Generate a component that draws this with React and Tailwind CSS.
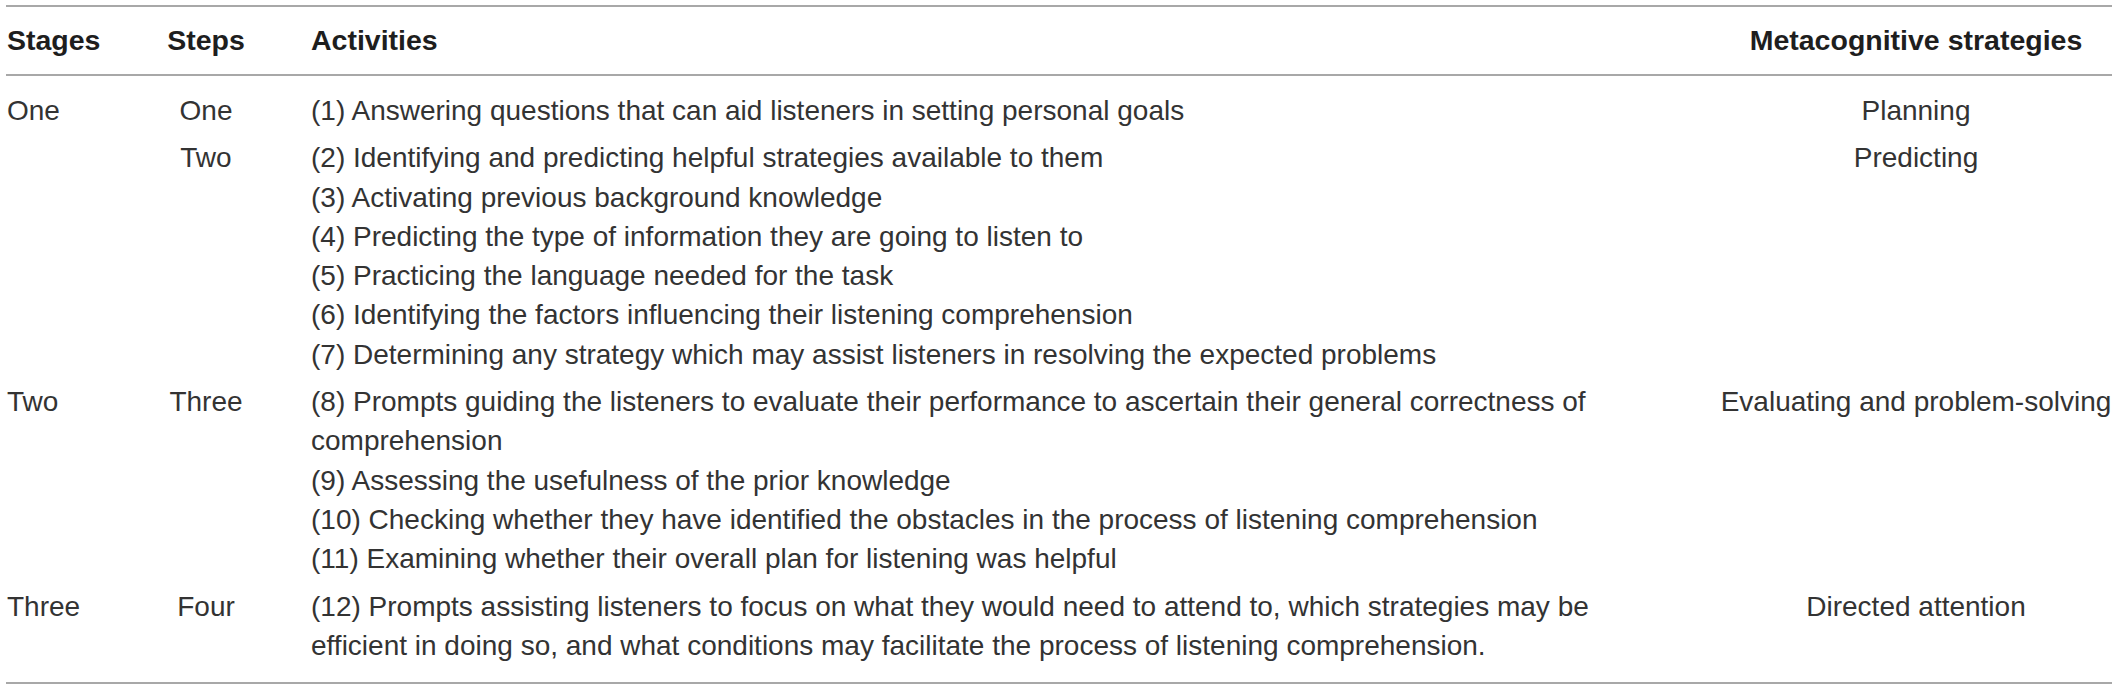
const rows = [
  {
    stage: "One",
    step: "One",
    activities: [["(1) Answering questions that can aid listeners in setting personal goals"]],
    strategy: "Planning",
  },
  {
    stage: "",
    step: "Two",
    activities: [
      ["(2) Identifying and predicting helpful strategies available to them"],
      ["(3) Activating previous background knowledge"],
      ["(4) Predicting the type of information they are going to listen to"],
      ["(5) Practicing the language needed for the task"],
      ["(6) Identifying the factors influencing their listening comprehension"],
      ["(7) Determining any strategy which may assist listeners in resolving the expected problems"],
    ],
    strategy: "Predicting",
  },
  {
    stage: "Two",
    step: "Three",
    activities: [
      [
        "(8) Prompts guiding the listeners to evaluate their performance to ascertain their general correctness of",
        "comprehension",
      ],
      ["(9) Assessing the usefulness of the prior knowledge"],
      ["(10) Checking whether they have identified the obstacles in the process of listening comprehension"],
      ["(11) Examining whether their overall plan for listening was helpful"],
    ],
    strategy: "Evaluating and problem-solving",
  },
  {
    stage: "Three",
    step: "Four",
    activities: [
      [
        "(12) Prompts assisting listeners to focus on what they would need to attend to, which strategies may be",
        "efficient in doing so, and what conditions may facilitate the process of listening comprehension.",
      ],
    ],
    strategy: "Directed attention",
  },
];

const cols = "grid grid-cols-[144px_112px_1458px_392px]";

export default function App() {
  return (
    <div className="bg-white w-[2118px] h-[690px] pt-[5px] pl-[6px] font-['Liberation_Sans',Arial,sans-serif] text-[#333333]">
      <div className="w-[2106px] border-t-2 border-b-2 border-[#a8a8a8]">
        {/* header */}
        <div className={`${cols} h-[69px] items-center border-b-2 border-[#a8a8a8] text-[28.5px] font-bold text-[#1e1e1e] leading-[39px]`}>
          <div className="pl-[1px]">Stages</div>
          <div className="text-center">Steps</div>
          <div className="pl-[49px]">Activities</div>
          <div className="text-center">Metacognitive strategies</div>
        </div>

        {/* body */}
        <div className="pt-[11px] pb-[13px] text-[28px] leading-[39.3px]">
          {rows.map((row, i) => (
            <div key={i} className={`${cols} py-[4px]`}>
              <div className="pl-[1px]">{row.stage}</div>
              <div className="text-center">{row.step}</div>
              <div className="pl-[49px] whitespace-nowrap">
                {row.activities.map((lines, j) => (
                  <div key={j}>
                    {lines.map((line, k) => (
                      <div key={k}>{line}</div>
                    ))}
                  </div>
                ))}
              </div>
              <div className="text-center whitespace-nowrap">{row.strategy}</div>
            </div>
          ))}
        </div>
      </div>
    </div>
  );
}
